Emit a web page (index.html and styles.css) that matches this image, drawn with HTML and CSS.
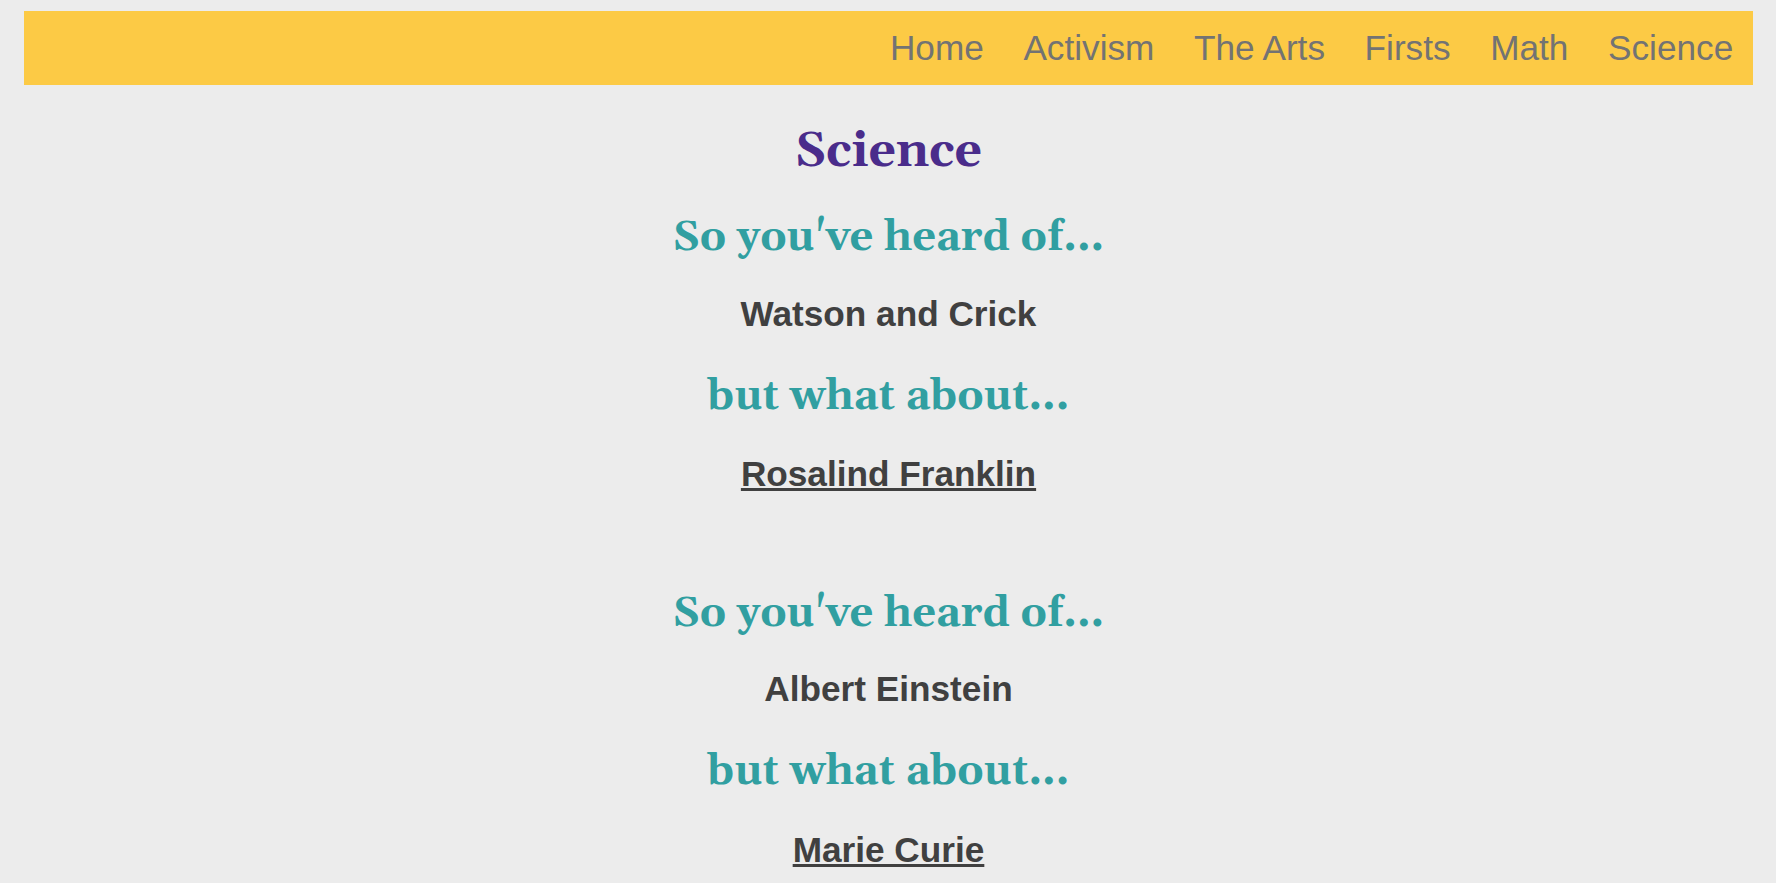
FILE: index.html
```html
<!DOCTYPE html>
<html lang="en">
<head>
<meta charset="utf-8">
<title>Science</title>
<link rel="stylesheet" href="styles.css">
</head>
<body>
<div class="page">
  <nav class="topnav">
    <a class="nav-link" href="#">Home</a>
    <a class="nav-link" href="#">Activism</a>
    <a class="nav-link" href="#">The Arts</a>
    <a class="nav-link" href="#">Firsts</a>
    <a class="nav-link" href="#">Math</a>
    <a class="nav-link" href="#">Science</a>
  </nav>
  <main class="content">
    <h1 class="page-title">Science</h1>
    <section class="pair">
      <h2 class="lead">So you've heard of...</h2>
      <h3 class="known">Watson and Crick</h3>
      <h2 class="lead">but what about...</h2>
      <h3 class="known unsung-wrap"><a class="unsung" href="#">Rosalind Franklin</a></h3>
    </section>
    <section class="pair">
      <h2 class="lead">So you've heard of...</h2>
      <h3 class="known">Albert Einstein</h3>
      <h2 class="lead">but what about...</h2>
      <h3 class="known unsung-wrap"><a class="unsung" href="#">Marie Curie</a></h3>
    </section>
  </main>
</div>
</body>
</html>
```

FILE: styles.css
```css
html, body {
  margin: 0;
  padding: 0;
  background: #ececec;
}

.page {
  padding: 11px 23px 0 24px;
  font-family: "Liberation Sans", Arial, sans-serif;
}

.topnav {
  height: 74px;
  background: #fcca45;
  display: flex;
  justify-content: flex-end;
  align-items: center;
}

.nav-link {
  padding: 0 19.8px;
  font-size: 35.2px;
  line-height: 1;
  color: #737373;
  text-decoration: none;
}

.content {
  padding-top: 43px;
  text-align: center;
}

.page-title {
  margin: 0 0 41px;
  font-family: Georgia, Gelasio, "DejaVu Serif", serif;
  font-weight: bold;
  font-size: 48px;
  line-height: 1;
  color: #4a2c8b;
}

.pair + .pair {
  margin-top: 101px;
}

.lead {
  margin: 0 0 37px;
  font-family: Georgia, Gelasio, "DejaVu Serif", serif;
  font-weight: bold;
  font-size: 41.6px;
  line-height: 1;
  color: #319fa1;
}

.known {
  margin: 0 0 45px;
  font-size: 35.2px;
  font-weight: bold;
  line-height: 1;
  color: #404040;
}

.unsung-wrap {
  padding-top: 2px;
  margin-bottom: 0;
}

.unsung {
  color: #404040;
  text-decoration: underline;
}
```
